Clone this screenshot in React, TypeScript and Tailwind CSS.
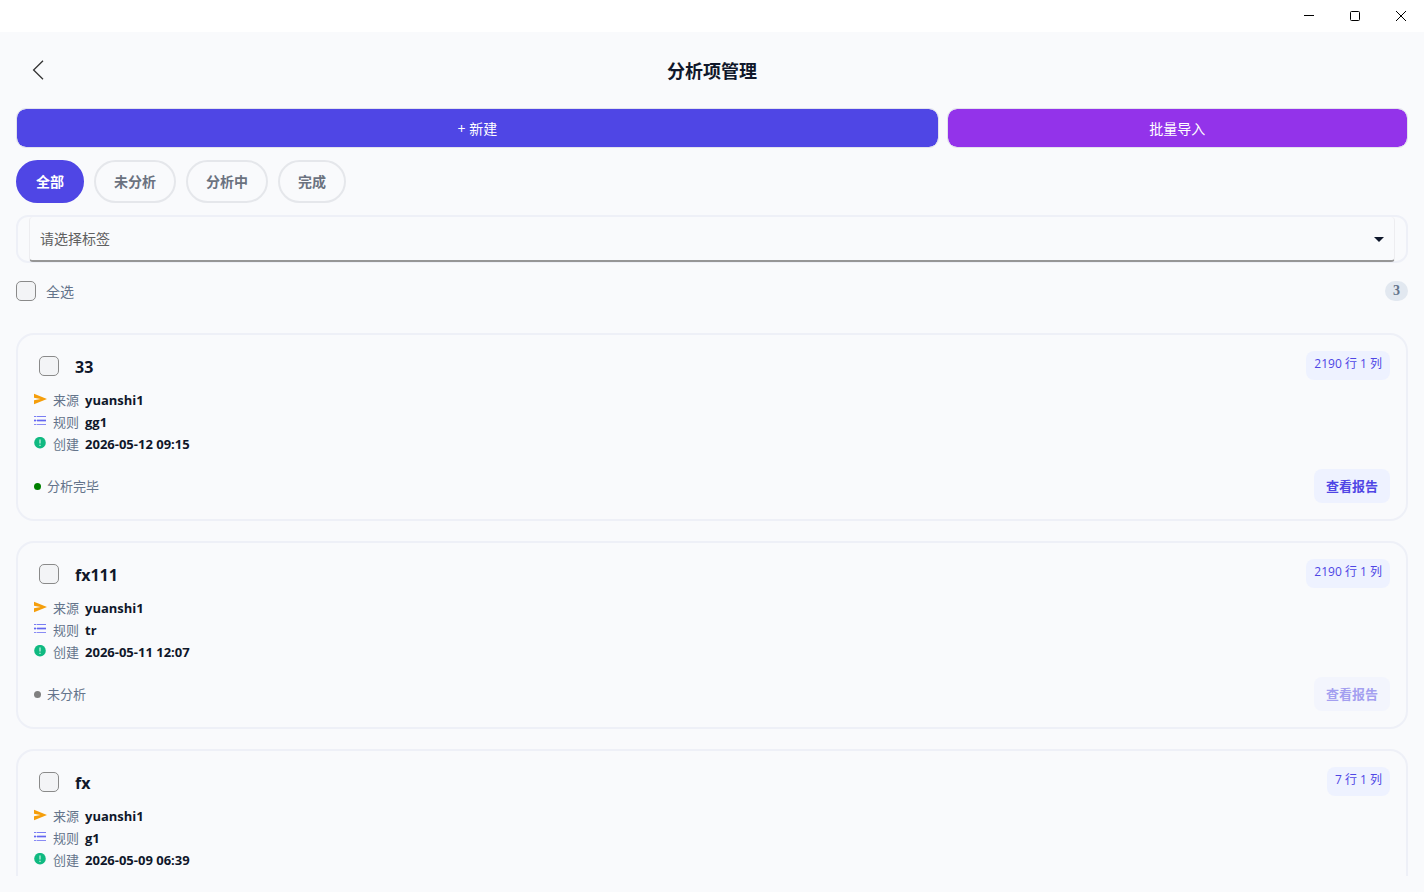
import { useState } from "react";

type Item = {
  id: number;
  name: string;
  size: string;
  source: string;
  rule: string;
  created: string;
  done: boolean;
};

const items: Item[] = [
  { id: 1, name: "33", size: "2190 行 1 列", source: "yuanshi1", rule: "gg1", created: "2026-05-12 09:15", done: true },
  { id: 2, name: "fx111", size: "2190 行 1 列", source: "yuanshi1", rule: "tr", created: "2026-05-11 12:07", done: false },
  { id: 3, name: "fx", size: "7 行 1 列", source: "yuanshi1", rule: "g1", created: "2026-05-09 06:39", done: false },
];

const filters = ["全部", "未分析", "分析中", "完成"];

const checkboxClass =
  "size-5 shrink-0 appearance-none rounded-[5px] border border-[#8a8a8a] bg-[#f3f4f6] checked:bg-[#4f46e5]";

function SendIcon() {
  return (
    <svg className="size-3 overflow-visible" viewBox="0 0 12 12" aria-hidden="true">
      <path d="M0 0.8 13 6 0 11.2V7.2L6.5 6 0 4.8Z" fill="#f59e0b" />
    </svg>
  );
}

function ListIcon() {
  return (
    <svg className="size-3" viewBox="0 0 12 12" aria-hidden="true">
      <g fill="#6366f1">
        <path d="M0 1h2v1H0zM3 1h9v1H3z" opacity=".85" />
        <path d="M0 5h2v1H0zM3 5h9v1H3z" />
        <path d="M0 4h2v1H0zM3 4h9v1H3zM0 6h2v1H0zM3 6h9v1H3z" opacity=".35" />
        <path d="M0 9h2v1H0zM3 9h9v1H3z" opacity=".75" />
        <path d="M2 1h1v1H2zM2 5h1v1H2zM2 9h1v1H2z" opacity=".35" />
      </g>
    </svg>
  );
}

function AlertIcon() {
  return (
    <svg className="size-3" viewBox="0 0 12 12" aria-hidden="true">
      <circle cx="6" cy="5.7" r="5.8" fill="#10b981" />
      <path d="M5.3 2.6h1.4v4H5.3zM5.3 7.8h1.4v1.3H5.3z" fill="#b5ead7" />
    </svg>
  );
}

function TitleBar() {
  return (
    <div className="flex h-8 shrink-0 justify-end bg-white text-black">
      <button aria-label="最小化" className="flex w-[46px] items-center justify-center">
        <svg className="size-[10px]" viewBox="0 0 10 10">
          <path d="M0 4.5h10" stroke="currentColor" />
        </svg>
      </button>
      <button aria-label="最大化" className="flex w-[46px] items-center justify-center">
        <svg className="size-[10px]" viewBox="0 0 10 10">
          <rect x=".5" y=".5" width="9" height="9" rx="1" fill="none" stroke="currentColor" />
        </svg>
      </button>
      <button aria-label="关闭" className="flex w-[46px] items-center justify-center">
        <svg className="size-[10px]" viewBox="0 0 10 10">
          <path d="M0 0 10 10M10 0 0 10" stroke="currentColor" />
        </svg>
      </button>
    </div>
  );
}

function Detail({ icon, label, value }: { icon: React.ReactNode; label: string; value: string }) {
  return (
    <div className="flex h-[22px] items-center">
      <span className="mr-[7px] pb-0.5">{icon}</span>
      <dt className="mr-1.5 text-[#64748b]">{label}</dt>
      <dd className="font-bold text-[#0f172a]">{value}</dd>
    </div>
  );
}

function Card({ item }: { item: Item }) {
  return (
    <article className="shrink-0 rounded-[18px] border-2 border-[#eef0f7] p-4">
      <div className="flex items-start justify-between">
        <label className="flex h-[30px] items-center gap-4 pl-[5px] text-base font-bold text-[#0f172a]">
          <input type="checkbox" className={checkboxClass} />
          <span className="pt-0.5">{item.name}</span>
        </label>
        <span className="h-[29px] rounded-lg bg-[#eef2ff] px-2 pt-1 text-xs leading-[18px] text-[#4f46e5]">
          {item.size}
        </span>
      </div>
      <dl className="mt-2 text-[13px] leading-[22px]">
        <Detail icon={<SendIcon />} label="来源" value={item.source} />
        <Detail icon={<ListIcon />} label="规则" value={item.rule} />
        <Detail icon={<AlertIcon />} label="创建" value={item.created} />
      </dl>
      <div className="mt-3.5 flex items-center justify-between text-[13px]">
        <span className="flex items-center gap-1.5 text-[#64748b]">
          <span className={item.done ? "size-[7px] rounded-full bg-[#008000]" : "size-[7px] rounded-full bg-[#808080]"} />
          <span className="pt-0.5">{item.done ? "分析完毕" : "未分析"}</span>
        </span>
        <button
          disabled={!item.done}
          className="h-[34px] rounded-lg bg-[#eef2ff] px-3 pt-0.5 font-bold text-[#4f46e5] disabled:opacity-50"
        >
          查看报告
        </button>
      </div>
    </article>
  );
}

export default function App() {
  const [active, setActive] = useState("全部");
  return (
    <div className="flex h-screen flex-col overflow-hidden bg-[#f9fafc] font-['Open_Sans','Noto_Sans_CJK_SC',sans-serif]">
      <TitleBar />
      <main className="flex min-h-0 flex-1 flex-col p-4">
        <header className="grid h-11 shrink-0 grid-cols-[44px_1fr_44px] items-center">
          <button aria-label="返回" className="flex size-11 items-center justify-center text-[#333]">
            <svg className="h-5 w-3" viewBox="0 0 12 20" fill="none" stroke="currentColor" strokeWidth="1.3">
              <path d="M11 .8 1.6 10 11 19.2" />
            </svg>
          </button>
          <h1 className="pt-0.5 text-center text-lg font-bold text-[#0f172a]">分析项管理</h1>
        </header>

        <div className="mt-4 grid shrink-0 grid-cols-[2fr_1fr] gap-2 text-sm text-white">
          <button className="h-10 rounded-[10px] border border-[#e2e3ec] bg-[#4f46e5] bg-clip-padding pt-0.5">+ 新建</button>
          <button className="h-10 rounded-[10px] border border-[#e2e3ec] bg-[#9333ea] bg-clip-padding pt-0.5">批量导入</button>
        </div>

        <nav className="mt-3 flex shrink-0 gap-2.5 text-sm font-bold">
          {filters.map((f) => (
            <button
              key={f}
              onClick={() => setActive(f)}
              className={
                f === active
                  ? "h-[43px] rounded-full border-2 border-[#4f46e5] bg-[#4f46e5] px-[18px] text-white"
                  : "h-[43px] rounded-full border-2 border-[#e5e7eb] px-[18px] text-[#6b7280]"
              }
            >
              {f}
            </button>
          ))}
        </nav>

        <div className="mt-3 h-12 shrink-0 rounded-xl border-2 border-[#eef0f7] px-[11px]">
          <div className="relative h-[45px]">
            <select
              aria-label="标签"
              className="h-full w-full appearance-none rounded-[4px] border border-b-2 border-t-0 border-[#ededf0] border-b-[#969696] px-2.5 text-sm text-[#606060] outline-none"
            >
              <option>请选择标签</option>
            </select>
            <svg className="pointer-events-none absolute right-[11px] top-5 h-[5px] w-[10px]" viewBox="0 0 10 5" aria-hidden="true">
              <path d="M0 0h10L5 5Z" fill="#0f172a" />
            </svg>
          </div>
        </div>

        <div className="mt-3 flex h-8 shrink-0 items-center justify-between">
          <label className="flex items-center gap-2.5 text-sm text-[#64748b]">
            <input type="checkbox" className={checkboxClass} />
            <span className="pt-0.5">全选</span>
          </label>
          <span className="rounded-full bg-[#e2e8f0] px-2 font-['Liberation_Serif',serif] text-sm leading-5 font-bold text-[#64748b]">
            3
          </span>
        </div>

        <section className="mt-[26px] flex min-h-0 flex-1 flex-col gap-5 overflow-y-auto [scrollbar-width:none]">
          {items.map((item) => (
            <Card key={item.id} item={item} />
          ))}
        </section>
      </main>
    </div>
  );
}
